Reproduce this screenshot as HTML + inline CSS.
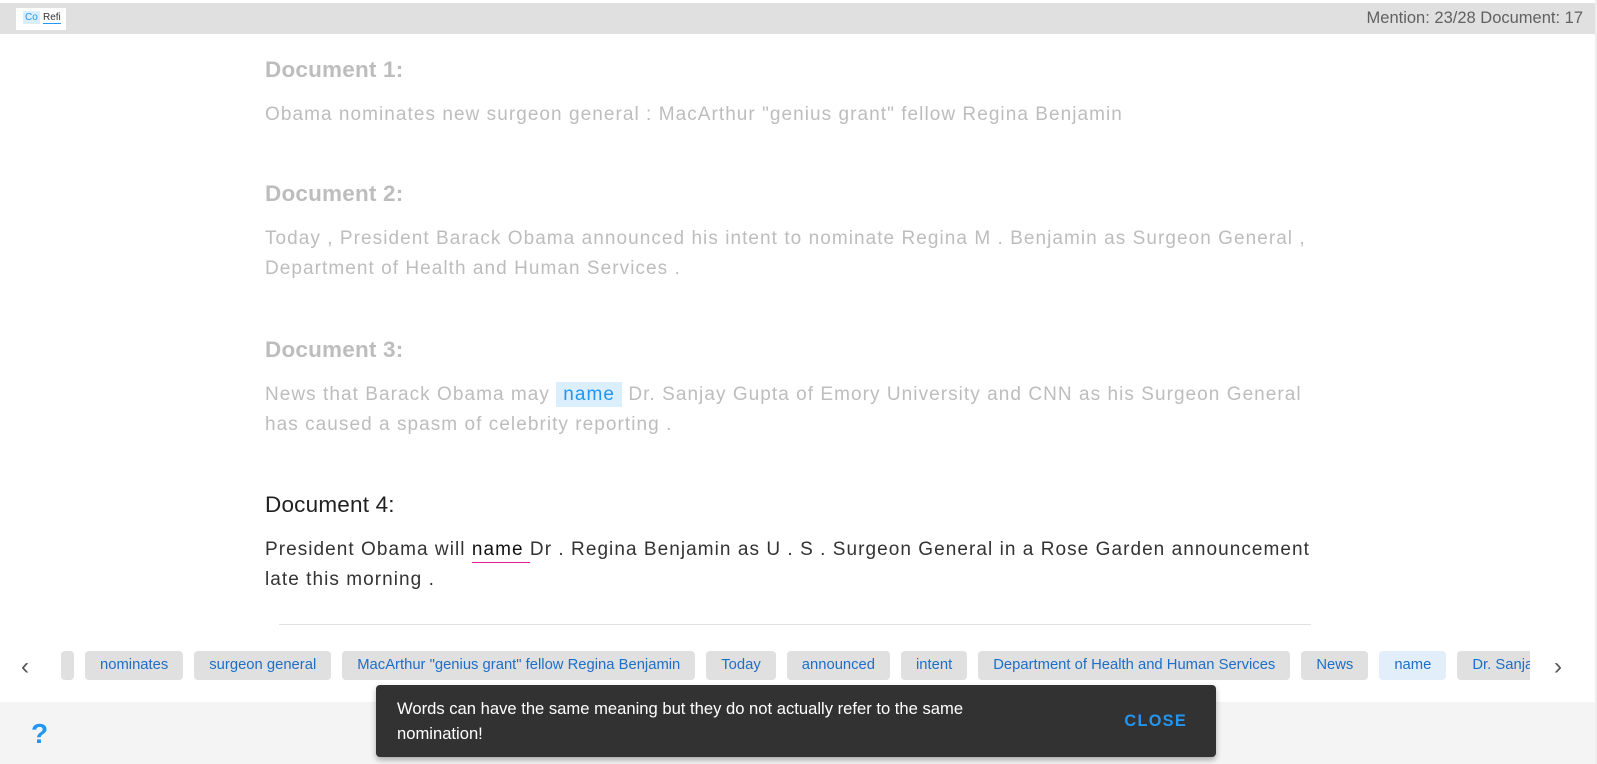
<!DOCTYPE html>
<html><head><meta charset="utf-8"><style>
*{margin:0;padding:0;box-sizing:border-box}
body{width:1597px;height:764px;overflow:hidden;background:#fff;font-family:"Liberation Sans",sans-serif;position:relative}
.top{position:absolute;left:0;top:3px;width:1595px;height:31px;background:#e0e0e0}
.logo{position:absolute;left:16px;top:5px;width:50px;height:22px;background:#fff;font-size:10px}
.logo .co{position:absolute;left:7px;top:3px;background:#dbeefb;color:#2196f3;padding:1px 2px}
.logo .re{position:absolute;left:27px;top:4px;color:#333;border-bottom:1px solid #2196f3;line-height:11px}
.mention{position:absolute;right:12px;top:6px;font-size:16.5px;color:#616161}
.rb{position:absolute;left:1595px;top:0;width:2px;height:764px;background:#eee}
.doc{position:absolute;left:265px;width:1050px}
h2{font-size:22.5px;font-weight:bold;color:#bdbdbd;letter-spacing:.2px}
p{font-size:19px;line-height:29.5px;color:#bdbdbd;letter-spacing:1.05px;margin-top:17px}
.dark h2{color:#212121;font-weight:normal}
.dark p{color:#333}
.hl{background:#dbeefb;color:#2196f3;padding:2px 7px}
.ul{color:#111;border-bottom:1px solid #e91e8c;padding-bottom:2px}
.hr{position:absolute;left:279px;top:624px;width:1032px;height:1px;background:#e0e0e0}
.chips{position:absolute;left:61px;top:651px;width:1469px;height:29px;overflow:hidden;white-space:nowrap}
.chip{display:inline-block;height:29px;line-height:29px;background:#e0e0e0;color:#1e6ec8;font-size:14.8px;padding:0 15px;border-radius:4px;margin-right:11px;vertical-align:top}
.arr{position:absolute;top:653px;font-size:24px;color:#555}
.bottom{position:absolute;left:0;top:702px;width:1595px;height:62px;background:#f4f4f4}
.q{position:absolute;left:31px;top:718px;font-size:28px;color:#2196f3;font-weight:bold}
.snack{position:absolute;left:376px;top:685px;width:840px;height:72px;background:#323232;border-radius:4px;box-shadow:0 3px 6px rgba(0,0,0,.3);color:#fff;font-size:16.6px;line-height:25px}
.snack .t{position:absolute;left:21px;top:11px;width:600px}
.snack .c{position:absolute;right:29px;top:24px;color:#2196f3;font-weight:bold;letter-spacing:1.3px;font-size:16.3px}
</style></head><body>
<div class="top"><div class="logo"><span class="co">Co</span><span class="re">Refi</span></div><div class="mention">Mention: 23/28 Document: 17</div></div>
<div class="rb"></div>
<div class="doc" style="top:57px"><h2>Document 1:</h2><p>Obama nominates new surgeon general : MacArthur "genius grant" fellow Regina Benjamin</p></div>
<div class="doc" style="top:181px"><h2>Document 2:</h2><p>Today , President Barack Obama announced his intent to nominate Regina M . Benjamin as Surgeon General , Department of Health and Human Services .</p></div>
<div class="doc" style="top:337px"><h2>Document 3:</h2><p>News that Barack Obama may <span class="hl">name</span> Dr. Sanjay Gupta of Emory University and CNN as his Surgeon General has caused a spasm of celebrity reporting .</p></div>
<div class="doc dark" style="top:492px"><h2>Document 4:</h2><p>President Obama will <span class="ul">name </span>Dr . Regina Benjamin as U . S . Surgeon General in a Rose Garden announcement late this morning .</p></div>
<div class="hr"></div>
<div class="arr" style="left:21px">&#8249;</div>
<div class="chips"><span class="chip" style="width:13px;padding:0;margin-right:11px"></span><span class="chip">nominates</span><span class="chip">surgeon general</span><span class="chip">MacArthur "genius grant" fellow Regina Benjamin</span><span class="chip">Today</span><span class="chip">announced</span><span class="chip">intent</span><span class="chip">Department of Health and Human Services</span><span class="chip">News</span><span class="chip" style="background:#e3eefb">name</span><span class="chip">Dr. Sanjay Gupta</span></div>
<div class="arr" style="left:1554px">&#8250;</div>
<div class="bottom"></div>
<div class="q">?</div>
<div class="snack"><div class="t">Words can have the same meaning but they do not actually refer to the same nomination!</div><div class="c">CLOSE</div></div>
</body></html>
